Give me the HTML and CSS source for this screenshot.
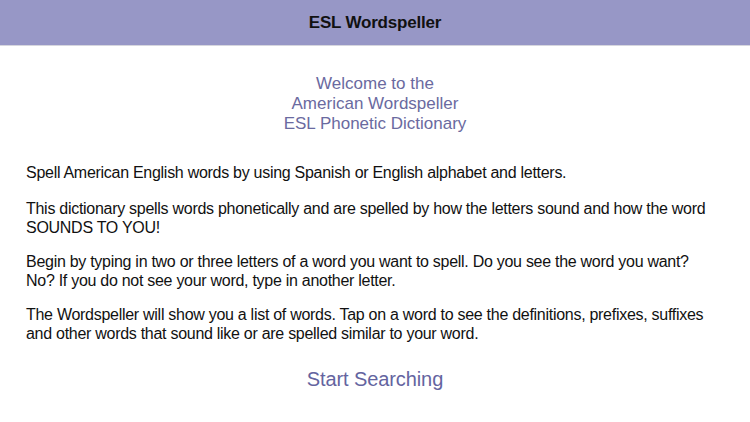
FILE: index.html
```html
<!DOCTYPE html>
<html>
<head>
<meta charset="utf-8">
<link rel="stylesheet" href="styles.css">
</head>
<body>
<header class="nav">
  <div class="nav-title">ESL Wordspeller</div>
</header>
<main class="content">
  <div class="welcome">
    <div>Welcome to the</div>
    <div>American Wordspeller</div>
    <div>ESL Phonetic Dictionary</div>
  </div>
  <div class="body">
    <p>Spell American English words by using Spanish or English alphabet and letters.</p>
    <p>This dictionary spells words phonetically and are spelled by how the letters sound and how the word SOUNDS TO YOU!</p>
    <p>Begin by typing in two or three letters of a word you want to spell. Do you see the word you want? No? If you do not see your word, type in another letter.</p>
    <p>The Wordspeller will show you a list of words. Tap on a word to see the definitions, prefixes, suffixes and other words that sound like or are spelled similar to your word.</p>
  </div>
  <div class="start">Start Searching</div>
</main>
</body>
</html>
```
FILE: styles.css
```css
html, body {
  margin: 0;
  padding: 0;
  background: #ffffff;
  font-family: "Liberation Sans", Arial, sans-serif;
}
.nav {
  height: 45px;
  background: #9797c6;
  border-bottom: 1px solid #d6d6de;
  display: flex;
  align-items: center;
  justify-content: center;
}
.nav-title {
  font-size: 17px;
  font-weight: bold;
  color: #111111;
  letter-spacing: -0.2px;
}
.content {
  padding: 0 36px 0 26px;
}
.welcome {
  margin-top: 28px;
  padding-left: 10px;
  text-align: center;
  color: #6a6aa0;
  font-size: 17px;
  line-height: 20px;
}
.body {
  margin-top: 29px;
  font-size: 16px;
  line-height: 19px;
  letter-spacing: -0.28px;
  color: #111111;
}
.body p {
  margin: 0 0 15px 0;
}
.body p:first-child {
  margin-bottom: 17px;
}
.body p:last-child {
  margin-bottom: 0;
}
.start {
  margin-top: 24px;
  padding-left: 10px;
  text-align: center;
  color: #6464a0;
  font-size: 20px;
  line-height: 24px;
  letter-spacing: -0.1px;
}
```
